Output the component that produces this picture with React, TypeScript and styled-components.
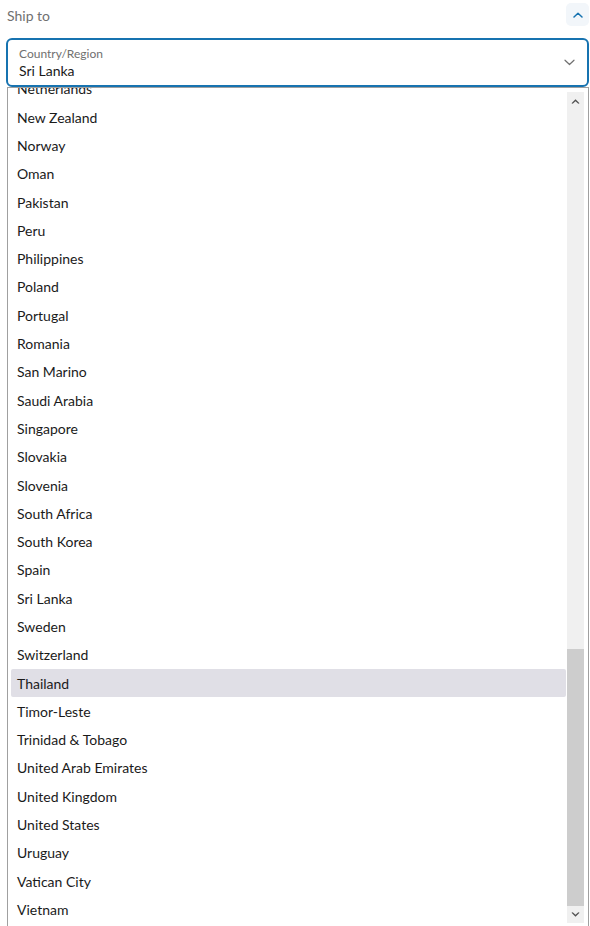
import React from 'react';
import styled, {createGlobalStyle} from "styled-components";

const GlobalStyle = createGlobalStyle`
  html, body {
    margin: 0;
    padding: 0;
    background: #ffffff;
    overflow: hidden;
  }
  body {
    font-family: "Segoe UI", Lato, "Noto Sans", sans-serif;
    color: #1a1a1a;
  }
`;

const Page = styled.div`
  width: 590px;
  height: 926px;
  padding: 0 1px 0 6px;
  box-sizing: border-box;
`;

const Header = styled.div`
  height: 30px;
  display: flex;
  flex-direction: row;
  align-items: center;
  justify-content: space-between;
  padding-left: 1px;
  margin-bottom: 8px;
`;

const HeaderTitle = styled.span`
  font-size: 14px;
  color: #707070;
`;

const ToggleButton = styled.button`
  width: 23px;
  height: 23px;
  margin-top: -1px;
  border: none;
  border-radius: 5px;
  background: #f2f6fa;
  display: flex;
  align-items: center;
  justify-content: center;
  padding: 0;
`;

const SelectWrap = styled.div`
  position: relative;
`;

const SelectBox = styled.div`
  height: 49px;
  box-sizing: border-box;
  border: 2px solid #1773b0;
  border-radius: 6px;
  display: flex;
  flex-direction: row;
  align-items: center;
  padding: 0 12px 0 11px;
`;

const SelectTexts = styled.div`
  flex: 1;
  display: flex;
  flex-direction: column;
  gap: 1px;
  margin-top: 1px;
`;

const SelectLabel = styled.span`
  font-size: 12px;
  line-height: 14px;
  color: #707070;
`;

const SelectValue = styled.span`
  font-size: 14px;
  line-height: 17px;
  color: #1a1a1a;
`;

const Popup = styled.div`
  position: absolute;
  top: 100%;
  left: 1px;
  width: 582px;
  height: 840px;
  box-sizing: border-box;
  border: 1px solid #a0a0a0;
  background: #ffffff;
  display: flex;
  flex-direction: row;
`;

const ListViewport = styled.div`
  flex: 1;
  overflow: hidden;
  padding: 0 1px 0 3px;
`;

const Option = styled.div<{ $active?: boolean }>`
  height: 28.3px;
  display: flex;
  align-items: center;
  padding-left: 6px;
  font-size: 14px;
  color: #1a1a1a;
  border-radius: 2px;
  background: ${p => p.$active ? '#e0dfe6' : 'transparent'};
`;

const Scrollbar = styled.div`
  width: 17px;
  margin: 4px 4px 3px 0;
  background: #f0f0f0;
  display: flex;
  flex-direction: column;
`;

const ArrowButton = styled.div`
  height: 17px;
  display: flex;
  align-items: center;
  justify-content: center;
  flex-shrink: 0;
`;

const Track = styled.div`
  flex: 1;
  display: flex;
  flex-direction: column;
  justify-content: flex-end;
`;

const Thumb = styled.div`
  background: #cdcdcd;
`;

const countries = [
  'Netherlands', 'New Zealand', 'Norway', 'Oman', 'Pakistan', 'Peru', 'Philippines', 'Poland',
  'Portugal', 'Romania', 'San Marino', 'Saudi Arabia', 'Singapore', 'Slovakia', 'Slovenia',
  'South Africa', 'South Korea', 'Spain', 'Sri Lanka', 'Sweden', 'Switzerland', 'Thailand',
  'Timor-Leste', 'Trinidad & Tobago', 'United Arab Emirates', 'United Kingdom', 'United States',
  'Uruguay', 'Vatican City', 'Vietnam',
];

const scrollOffset = 13.3;

const ChevronUp = ({color}: { color: string }) => (
  <svg width="10" height="6" viewBox="0 0 10 6" fill="none">
    <path d="M1 5L5 1.2L9 5" stroke={color} strokeWidth="1.5" strokeLinecap="round" strokeLinejoin="round"/>
  </svg>
);

const ChevronDown = () => (
  <svg width="11" height="7" viewBox="0 0 11 7" fill="none">
    <path d="M1 1.2L5.5 5.5L10 1.2" stroke="#707070" strokeWidth="1.2" strokeLinecap="round" strokeLinejoin="round"/>
  </svg>
);

const ScrollArrow = ({up}: { up?: boolean }) => (
  <svg width="9" height="6" viewBox="0 0 9 6">
    <path d={up ? "M0.5 5.2L4.5 1.2L8.5 5.2L7.3 5.8L4.5 3.2L1.7 5.8Z" : "M0.5 0.8L4.5 4.8L8.5 0.8L7.3 0.2L4.5 2.8L1.7 0.2Z"}
          fill="#505050"/>
  </svg>
);

const App = () => {
  return (
    <Page>
      <GlobalStyle/>
      <Header>
        <HeaderTitle>Ship to</HeaderTitle>
        <ToggleButton>
          <ChevronUp color={'#1773b0'}/>
        </ToggleButton>
      </Header>
      <SelectWrap>
        <SelectBox>
          <SelectTexts>
            <SelectLabel>Country/Region</SelectLabel>
            <SelectValue>Sri Lanka</SelectValue>
          </SelectTexts>
          <ChevronDown/>
        </SelectBox>
        <Popup>
          <ListViewport>
            <div style={{marginTop: -scrollOffset}}>
              {countries.map(name => (
                <Option key={name} $active={name === 'Thailand'}>{name}</Option>
              ))}
            </div>
          </ListViewport>
          <Scrollbar>
            <ArrowButton><ScrollArrow up/></ArrowButton>
            <Track>
              <Thumb style={{height: 257}}/>
            </Track>
            <ArrowButton><ScrollArrow/></ArrowButton>
          </Scrollbar>
        </Popup>
      </SelectWrap>
    </Page>
  );
};

export default App;
